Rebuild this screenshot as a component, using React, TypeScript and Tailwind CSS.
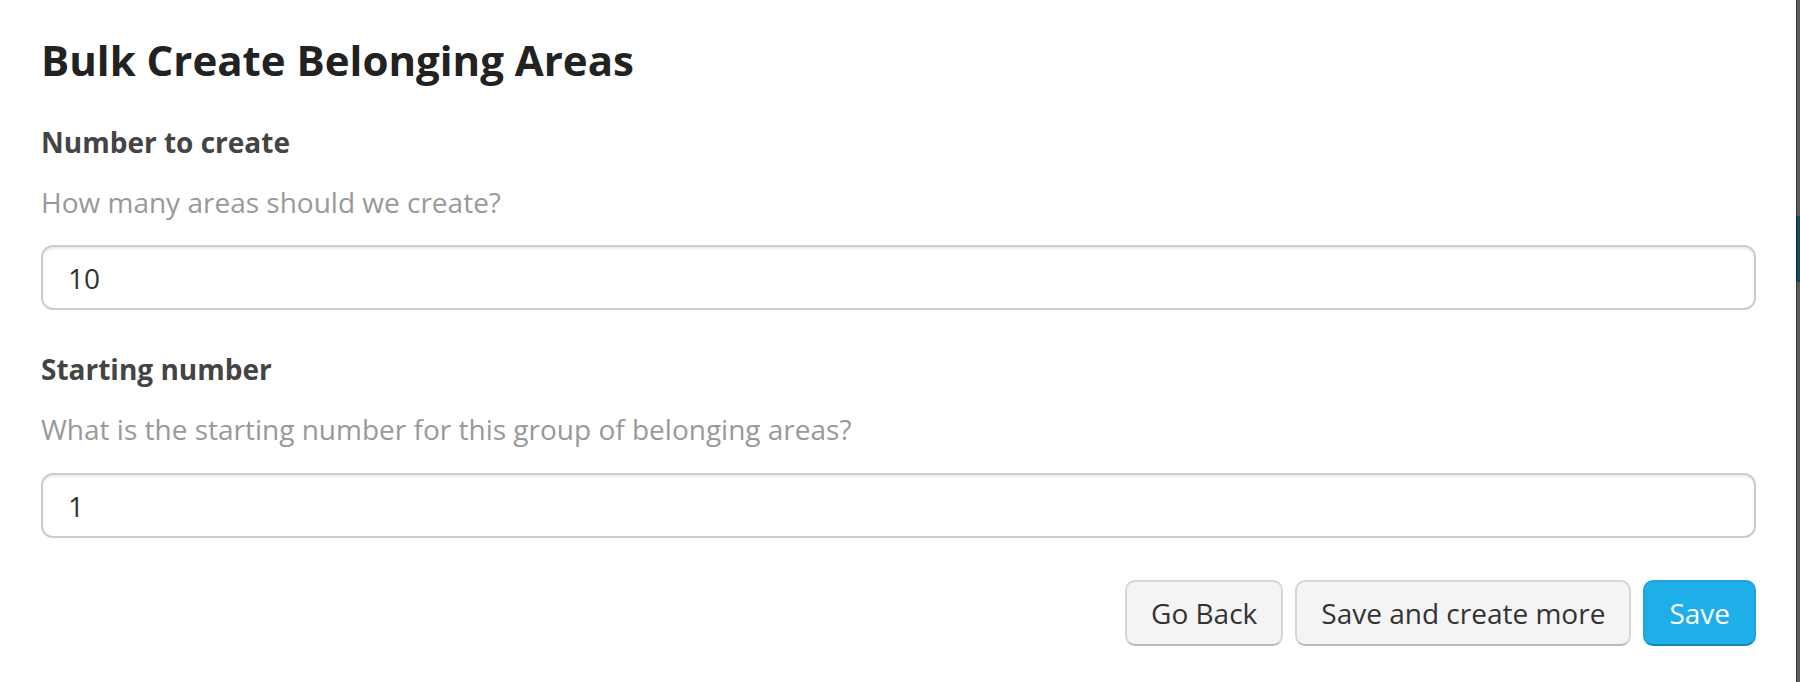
import React from "react";

export default function App() {
  const font = { fontFamily: '"Open Sans", "Noto Sans", sans-serif' };
  return (
    <div className="flex h-[682px] w-[1800px] bg-white" style={font}>
      <div className="flex-1 bg-white pl-[41px] pr-[40px] pt-[35px]">
        <h1 className="text-[42px] font-bold leading-[50px] text-[#222222]">
          Bulk Create Belonging Areas
        </h1>
        <div className="mt-[37px] text-[28px] font-bold leading-[40px] text-[#444444]">
          Number to create
        </div>
        <div className="mt-[20px] text-[28px] leading-[40px] text-[#999999]">
          How many areas should we create?
        </div>
        <div className="mt-[23px] flex h-[65px] items-center rounded-[12px] border-2 border-[#cccccc] px-[25px] text-[28px] text-[#333333] shadow-[inset_0_2px_2px_rgba(0,0,0,0.075)]">
          10
        </div>
        <div className="mt-[39px] text-[28px] font-bold leading-[40px] text-[#444444]">
          Starting number
        </div>
        <div className="mt-[20px] text-[28px] leading-[40px] text-[#999999]">
          What is the starting number for this group of belonging areas?
        </div>
        <div className="mt-[24px] flex h-[65px] items-center rounded-[12px] border-2 border-[#cccccc] px-[25px] text-[28px] text-[#333333] shadow-[inset_0_2px_2px_rgba(0,0,0,0.075)]">
          1
        </div>
        <div className="mt-[42px] flex justify-end gap-[12px]">
          <button className="flex h-[66px] items-center rounded-[10px] border-2 border-[#d6d6d6] border-b-[#bbbbbb] bg-[#f4f4f4] px-[24px] text-[28px] text-[#333333]">
            Go Back
          </button>
          <button className="flex h-[66px] items-center rounded-[10px] border-2 border-[#d6d6d6] border-b-[#bbbbbb] bg-[#f4f4f4] px-[24px] text-[28px] text-[#333333]">
            Save and create more
          </button>
          <button className="flex h-[66px] items-center rounded-[10px] border-2 border-[#1ba4df] border-b-[#1587bb] bg-[#1eaee8] px-[24px] text-[28px] text-white">
            Save
          </button>
        </div>
      </div>
      <div className="flex w-[4px] flex-col bg-[#575757]">
        <div className="h-[216px] border-l border-[#333333] bg-[#5a5a5a]" />
        <div className="h-[66px] border-l border-[#0b3344] bg-[#0e4a60]" />
        <div className="flex-1 border-l border-[#333333] bg-[#5a5a5a]" />
      </div>
    </div>
  );
}
